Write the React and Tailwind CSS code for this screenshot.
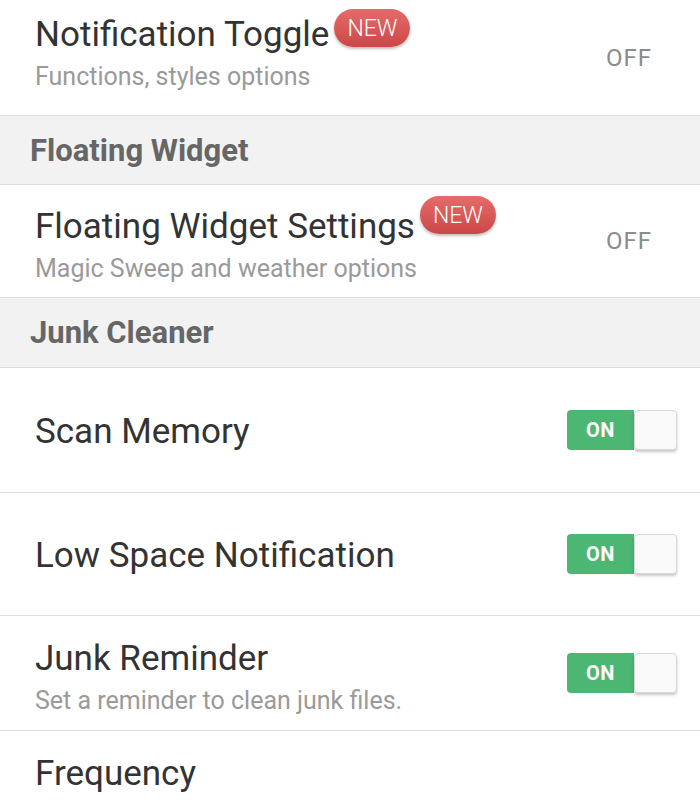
import React from 'react';

const NewBadge = ({ className = '' }) => (
  <span
    className={`ml-[5px] inline-flex h-[38px] items-center rounded-full bg-gradient-to-b from-[#e56b6b] to-[#cc4747] px-[13px] text-[23px] font-light leading-none text-white shadow-[0_2px_3px_rgba(0,0,0,0.25)] ${className}`}
  >
    NEW
  </span>
);

const Toggle = () => (
  <div className="flex h-[40px] w-[110px] shrink-0">
    <div className="flex w-[67px] items-center justify-center rounded-l-[4px] bg-[#4cb673] text-[20px] font-bold tracking-wide text-white">
      ON
    </div>
    <div className="w-[43px] rounded-[4px] border border-[#d9d9d9] bg-[#fafafa] shadow-[0_2px_3px_rgba(0,0,0,0.22)]"></div>
  </div>
);

const Off = () => (
  <span className="pr-[48px] text-[24px] tracking-[1px] text-[#8c8c8c]">OFF</span>
);

const Header = ({ title, h }) => (
  <div className={`flex items-center border-b border-[#dcdcdc] bg-[#f2f2f2] px-[30px] ${h}`}>
    <span className="pt-[2px] text-[31px] font-bold text-[#666666]">{title}</span>
  </div>
);

const Row = ({ title, subtitle, badge, badgeOffset, right, h, pt = 'pt-[23px]' }) => (
  <div className={`flex items-center justify-between border-b border-[#dedede] bg-white pl-[35px] ${h}`}>
    <div className={`self-start ${pt}`}>
      <div className="flex items-start">
        <span className="text-[35px] leading-[40px] text-[#333333]">{title}</span>
        {badge && <NewBadge className={badgeOffset} />}
      </div>
      {subtitle && (
        <div className="text-[25px] leading-[43px] text-[#9a9a9a]">{subtitle}</div>
      )}
    </div>
    {right}
  </div>
);

export default function App() {
  return (
    <div className="h-[800px] w-[700px] overflow-hidden bg-white font-['Roboto',sans-serif]">
      <Row
        title="Notification Toggle"
        subtitle="Functions, styles options"
        badge
        badgeOffset="-mt-[6px]"
        right={<Off />}
        h="h-[116px]"
        pt="pt-[15px]"
      />
      <Header title="Floating Widget" h="h-[69px]" />
      <Row
        title="Floating Widget Settings"
        subtitle="Magic Sweep and weather options"
        badge
        badgeOffset="-mt-[11px]"
        right={<Off />}
        h="h-[113px]"
        pt="pt-[22px]"
      />
      <Header title="Junk Cleaner" h="h-[70px]" />
      <div className="flex h-[125px] items-center justify-between border-b border-[#dedede] pl-[35px] pr-[23px]">
        <span className="pt-[5px] text-[35px] text-[#333333]">Scan Memory</span>
        <Toggle />
      </div>
      <div className="flex h-[123px] items-center justify-between border-b border-[#dedede] pl-[35px] pr-[23px]">
        <span className="pt-[5px] text-[35px] text-[#333333]">Low Space Notification</span>
        <Toggle />
      </div>
      <div className="flex h-[115px] items-center justify-between border-b border-[#dedede] pl-[35px] pr-[23px]">
        <div className="self-start pt-[23px]">
          <div className="text-[35px] leading-[40px] text-[#333333]">Junk Reminder</div>
          <div className="text-[25px] leading-[43px] text-[#9a9a9a]">Set a reminder to clean junk files.</div>
        </div>
        <Toggle />
      </div>
      <div className="h-[110px] pl-[35px] pt-[23px]">
        <span className="text-[35px] leading-[40px] text-[#333333]">Frequency</span>
      </div>
    </div>
  );
}
